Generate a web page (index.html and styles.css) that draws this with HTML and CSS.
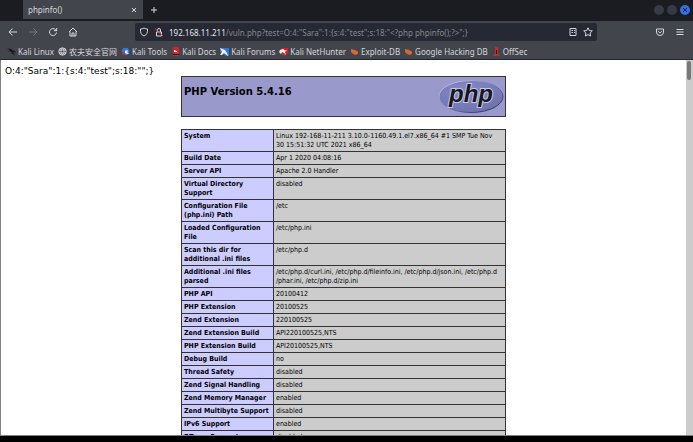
FILE: index.html
```html
<!DOCTYPE html>
<html lang="en">
<head>
<meta charset="utf-8">
<title>phpinfo()</title>
<link rel="stylesheet" href="styles.css">
</head>
<body>
<div class="window">
  <header class="tabs">
    <div class="tab"><span>phpinfo()</span><button class="icon-btn" aria-label="Close tab"><svg width="6" height="6" viewBox="0 0 6 6"><path d="M1 1l4 4M5 1l-4 4"/></svg></button></div>
    <button class="icon-btn new-tab" aria-label="New tab"><svg width="8" height="8" viewBox="0 0 8 8"><path d="M4 1v6M1 4h6"/></svg></button>
    <div class="controls">
      <button class="dot" aria-label="Minimize"></button>
      <button class="dot" aria-label="Maximize"></button>
      <button class="dot close" aria-label="Close"><svg width="6" height="6" viewBox="0 0 6 6"><path d="M1 1l4 4M5 1l-4 4"/></svg></button>
    </div>
  </header>
  <nav class="toolbar">
    <div class="nav-buttons">
      <button class="icon-btn" aria-label="Back"><svg width="10" height="10" viewBox="0 0 10 10"><path d="M9 5H1M4.500 1.500L1 5l3.500 3.500"/></svg></button>
      <button class="icon-btn dim" aria-label="Forward"><svg width="10" height="10" viewBox="0 0 10 10"><path d="M1 5h8M5.500 1.500L9 5 5.500 8.500"/></svg></button>
      <button class="icon-btn" aria-label="Reload"><svg width="10" height="10" viewBox="0 0 10 10"><path d="M8.500 5.500A3.500 3.500 0 1 1 7.300 2.400L8.500 3.500M8.700 1v2.700H6"/></svg></button>
      <button class="icon-btn" aria-label="Home"><svg width="10" height="10" viewBox="0 0 10 10"><path d="M1 5l4-4 4 4M2 4.500V9h6V4.500M4 9V6h2v3"/></svg></button>
    </div>
    <div class="address">
      <svg width="10" height="10" viewBox="0 0 10 10"><path d="M5 1c1.200.8 2.200 1 3.500 1C8.700 5.500 8 7.800 5 9 2 7.800 1.300 5.500 1.500 2 2.800 2 3.800 1.800 5 1z"/></svg>
      <svg width="10" height="10" viewBox="0 0 10 10"><path d="M2.500 5h5v4h-5zM3.500 5V3a1.500 1.500 0 0 1 3 0v2"/><path class="red" d="M1 1.500l8 7.500"/></svg>
      <div class="url"><span class="host">192.168.11.211</span><span>/vuln.php?test=O:4:"Sara":1:{s:4:"test";s:18:"&lt;?php phpinfo();?&gt;";}</span></div>
      <button class="icon-btn" aria-label="Reader view"><svg width="10" height="10" viewBox="0 0 10 10"><path d="M2 1.500h6v7H2zM3.500 3.500H5M3.500 5.500H5M6 3.500h1M6 5.500h1"/></svg></button>
      <button class="icon-btn" aria-label="Bookmark"><svg width="10" height="10" viewBox="0 0 10 10"><path d="M5 .8l1.300 2.700 3 .4-2.200 2.100.5 3L5 7.600 2.400 9l.5-3L.700 3.900l3-.4z"/></svg></button>
    </div>
    <div class="actions">
      <button class="icon-btn" aria-label="Pocket"><svg width="10" height="10" viewBox="0 0 10 10"><path d="M1.500 2h7v3a3.500 3.500 0 0 1-7 0zM3.200 4.200L5 6l1.800-1.800"/></svg></button>
      <button class="icon-btn" aria-label="Menu"><svg width="10" height="10" viewBox="0 0 10 10"><path d="M1.500 2.500h7M1.500 5h7M1.500 7.500h7"/></svg></button>
    </div>
  </nav>
  <nav class="bookmarks">
    <a href="#"><svg width="9" height="9" viewBox="0 0 9 9"><path class="ink" d="M0 1.500l4 .5 2 1.500 2 .5.500 1.500L6 5l1 2 1.500 1.500L5.500 7 4 4.500 1 4l2-.8z"/></svg>Kali Linux</a>
    <a href="#"><svg width="9" height="9" viewBox="0 0 9 9"><circle cx="4.500" cy="4.500" r="3.700"/><path d="M1 3h7M1 6h7M4.500 1c-2 2-2 5 0 7 2-2 2-5 0-7z"/></svg>农夫安全官网</a>
    <a href="#"><svg width="9" height="9" viewBox="0 0 9 9"><circle class="blue" cx="4.500" cy="4.500" r="3.800"/><path class="white" d="M4 4l2-1 1 1-1 1 2 2H6L4 6z"/><path class="crimson" d="M1 5l3 1v2L1 8z"/></svg>Kali Tools</a>
    <a href="#"><svg width="9" height="9" viewBox="0 0 9 9"><path class="crimson" d="M1.500 0H8v9H1.500z"/><path class="white" d="M3 3l2.500 1L7 5.500 5 5 3 5z"/><path class="ink" d="M1.500 7H8v1H1.500z"/></svg>Kali Docs</a>
    <a href="#"><svg width="9" height="9" viewBox="0 0 9 9"><path class="blue" d="M0 1h9v8H6L0 5z"/><path class="white" d="M0 1l5 2 2 3 1 3-4-3-2 2H0l2-3z"/></svg>Kali Forums</a>
    <a href="#"><svg width="9" height="9" viewBox="0 0 9 9"><path class="crimson" d="M2 1h7v5L6 9 1 7z"/><path class="white" d="M1 3l3-1 2 1.500 2-.5-2 2 1 3-2-2-2-1-1 2-2-2z"/></svg>Kali NetHunter</a>
    <a href="#"><svg width="9" height="9" viewBox="0 0 9 9"><path class="orange" d="M1 2l2 .5 2 .5 3 1.500v2L6 8 3 7 1 5z"/></svg>Exploit-DB</a>
    <a href="#"><svg width="9" height="9" viewBox="0 0 9 9"><path class="orange" d="M1 2l2 .5 2 .5 3 1.500v2L6 8 3 7 1 5z"/></svg>Google Hacking DB</a>
    <a href="#"><svg width="9" height="9" viewBox="0 0 9 9"><path class="crimson" d="M3 0h3v6l2 3H1l2-3z"/><path class="ink" d="M4 3h1v4H4z"/></svg>OffSec</a>
  </nav>
  <div class="viewport">
    <main class="page">
      <p class="echo">O:4:"Sara":1:{s:4:"test";s:18:"";}</p>
      <div class="info">
        <div class="banner">
          <h1>PHP Version 5.4.16</h1>
          <svg class="logo" width="66" height="34" viewBox="0 0 66 34" role="img" aria-label="PHP logo">
            <defs><linearGradient id="rim" x1="0" y1="0" x2="1" y2="1"><stop offset="0" stop-color="#d4d6f0"/><stop offset=".5" stop-color="#7478b4"/><stop offset="1" stop-color="#1c1c38"/></linearGradient>
            <radialGradient id="oval" cx=".4" cy=".3" r=".7"><stop offset="0" stop-color="#8689c6"/><stop offset="1" stop-color="#6f74b0"/></radialGradient></defs>
            <ellipse cx="33" cy="17.500" rx="32" ry="16" fill="url(#oval)" stroke="url(#rim)"/>
            <text class="logo-text" x="33" y="23" text-anchor="middle">php</text>
          </svg>
        </div>
        <table>
          <tbody>
          <tr><th scope="row">System</th><td>Linux 192-168-11-211 3.10.0-1160.49.1.el7.x86_64 #1 SMP Tue Nov<br>30 15:51:32 UTC 2021 x86_64</td></tr>
          <tr><th scope="row">Build Date</th><td>Apr 1 2020 04:08:16</td></tr>
          <tr><th scope="row">Server API</th><td>Apache 2.0 Handler</td></tr>
          <tr><th scope="row">Virtual Directory<br>Support</th><td>disabled</td></tr>
          <tr><th scope="row">Configuration File<br>(php.ini) Path</th><td>/etc</td></tr>
          <tr><th scope="row">Loaded Configuration<br>File</th><td>/etc/php.ini</td></tr>
          <tr><th scope="row">Scan this dir for<br>additional .ini files</th><td>/etc/php.d</td></tr>
          <tr><th scope="row">Additional .ini files<br>parsed</th><td>/etc/php.d/curl.ini, /etc/php.d/fileinfo.ini, /etc/php.d/json.ini, /etc/php.d<br>/phar.ini, /etc/php.d/zip.ini</td></tr>
          <tr><th scope="row">PHP API</th><td>20100412</td></tr>
          <tr><th scope="row">PHP Extension</th><td>20100525</td></tr>
          <tr><th scope="row">Zend Extension</th><td>220100525</td></tr>
          <tr><th scope="row">Zend Extension Build</th><td>API220100525,NTS</td></tr>
          <tr><th scope="row">PHP Extension Build</th><td>API20100525,NTS</td></tr>
          <tr><th scope="row">Debug Build</th><td>no</td></tr>
          <tr><th scope="row">Thread Safety</th><td>disabled</td></tr>
          <tr><th scope="row">Zend Signal Handling</th><td>disabled</td></tr>
          <tr><th scope="row">Zend Memory Manager</th><td>enabled</td></tr>
          <tr><th scope="row">Zend Multibyte Support</th><td>disabled</td></tr>
          <tr><th scope="row">IPv6 Support</th><td>enabled</td></tr>
          <tr><th scope="row">DTrace Support</th><td>disabled</td></tr>
          </tbody>
        </table>
      </div>
    </main>
    <div class="scrollbar"><div class="thumb"></div></div>
  </div>
</div>
</body>
</html>
```
FILE: styles.css
```css
* { box-sizing: border-box; }
body { margin: 0; background: #000; font-family: "Noto Sans", "Noto Sans CJK SC", sans-serif; font-size: 8px; color: #d6d7da; }
button { margin: 0; padding: 0; border: 0; background: none; color: inherit; font: inherit; }
svg { display: block; flex: none; fill: none; stroke: currentColor; stroke-width: 1; }
.window { display: flex; flex-direction: column; height: 100vh; padding-bottom: 6px; overflow: hidden; }
.icon-btn { display: flex; }
.dim { color: #76797f; }
.tabs { display: flex; align-items: stretch; flex: none; height: 21px; background: #1b1c22; padding: 0 3px 2px 23px; }
.tab { display: flex; align-items: center; justify-content: space-between; width: 120px; padding: 0 6px 0 5px; background: #42454c; }
.new-tab { align-items: center; margin-left: 7px; }
.controls { display: flex; align-items: center; gap: 3px; margin-left: auto; }
.dot { display: flex; align-items: center; justify-content: center; width: 10px; height: 10px; border-radius: 50%; background: #363b47; }
.close { background: #2d72e8; color: #0b1a38; }
.toolbar { display: flex; align-items: center; flex: none; height: 22px; padding: 0 8px; background: #42454c; }
.nav-buttons { display: flex; gap: 10px; width: 127px; }
.address { display: flex; align-items: center; flex: 1; gap: 5px; height: 18px; padding: 0 4px; border-radius: 2px; background: #262833; }
.url { flex: 1; color: #85878f; white-space: nowrap; }
.host { color: #e4e4e8; }
.actions { display: flex; gap: 10px; margin-left: 58px; }
.bookmarks { display: flex; align-items: center; flex: none; height: 17px; gap: 4px; padding: 0 7px; background: #42454c; border-bottom: 1px solid #25262b; }
.bookmarks a { display: flex; align-items: center; gap: 2px; color: inherit; text-decoration: none; white-space: nowrap; }
.red { stroke: #e04050; }
.ink { fill: #15161a; stroke: none; }
.blue { fill: #2f77d8; stroke: none; }
.white { fill: #f0f0f4; stroke: none; }
.crimson { fill: #c9252c; stroke: none; }
.orange { fill: #d9662a; stroke: none; }
.viewport { display: flex; flex: 1; min-height: 0; background: #fff; color: #000; border-left: 1px solid #808080; border-bottom: 1px solid #808080; font-family: "DejaVu Sans", sans-serif; }
.page { display: grid; grid-template-columns: 1fr 325px 1fr; flex: 1; min-width: 0; overflow: hidden; }
.echo { margin: 5px 0 0 4px; font-size: 9px; line-height: 12px; white-space: nowrap; }
.info { padding-top: 16px; font-size: 7px; line-height: 9px; }
.banner { display: flex; align-items: flex-start; justify-content: space-between; height: 41px; padding: 2px 1px 2px 2px; border: 1px solid #333; background: #9999cc; }
.banner h1 { margin: 6px 0; font-size: 10px; line-height: 14px; }
.logo-text { font: italic bold 24px "Liberation Sans", sans-serif; fill: #17171c; stroke: #c8caea; stroke-width: 2; paint-order: stroke; }
table { width: 100%; margin-top: 12px; border-collapse: collapse; table-layout: fixed; font-family: "DejaVu Sans Condensed", "DejaVu Sans", sans-serif; }
th, td { padding: 2px 0 1px 2px; border: 1px solid #333; text-align: left; vertical-align: top; }
th { width: 92px; background: #ccccff; }
td { background: #ccc; }
.scrollbar { width: 7px; padding: 1px 2px 1px 1px; background: #ccc; }
.thumb { height: 19px; border-radius: 2px; background: #777; }
```
